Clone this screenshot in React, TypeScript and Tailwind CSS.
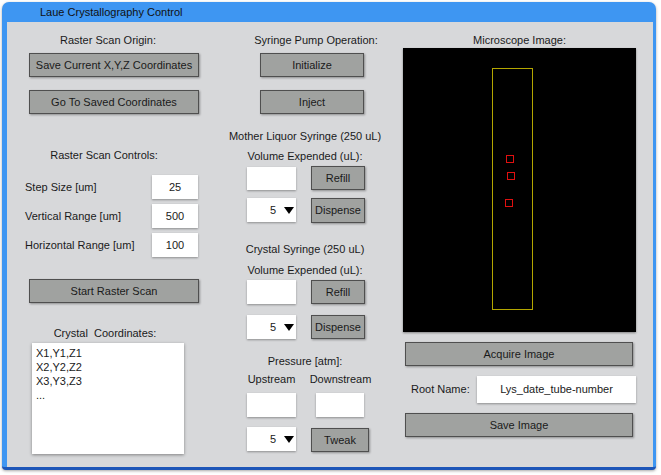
import React from "react";

const font = { fontFamily: '"Liberation Sans", Arial, sans-serif' };

function Btn({ children, className = "" }: { children: React.ReactNode; className?: string }) {
  return (
    <div
      className={
        "h-[24px] flex items-center justify-center bg-[#a0a2a0] border border-[#4f4f4f] shadow-[1px_1px_2px_rgba(0,0,0,0.35)] text-[11px] text-[#1a1a1a] whitespace-nowrap " +
        className
      }
    >
      {children}
    </div>
  );
}

function Field({ children, className = "" }: { children?: React.ReactNode; className?: string }) {
  return (
    <div
      className={
        "bg-white flex items-center justify-center shadow-[0_1px_2px_rgba(0,0,0,0.35)] text-[11px] text-[#1a1a1a] " +
        className
      }
    >
      {children}
    </div>
  );
}

function Select({ className = "" }: { className?: string }) {
  return (
    <div
      className={
        "bg-white flex items-center justify-end pr-[2px] shadow-[0_1px_2px_rgba(0,0,0,0.35)] text-[11px] text-[#1a1a1a] " +
        className
      }
    >
      <span>5</span>
      <svg width="10" height="7" viewBox="0 0 10 7" className="ml-[8px]">
        <polygon points="0,0 10,0 5,7" fill="#000" />
      </svg>
    </div>
  );
}

function Label({ children, className = "" }: { children: React.ReactNode; className?: string }) {
  return <div className={"text-[11px] leading-[13px] h-[13px] text-[#1a1a1a] whitespace-nowrap " + className}>{children}</div>;
}

export default function App() {
  return (
    <div className="w-[661px] h-[475px] bg-white overflow-hidden" style={font}>
      <div className="ml-[2px] mt-[2px] w-[654px] h-[468px] flex flex-col bg-[#3e96f2] rounded-t-[7px] rounded-b-[4px] border-b-[3px] border-[#1d56b8] shadow-[0_1px_3px_rgba(0,0,0,0.35)] overflow-hidden">
        <div className="h-[20px] shrink-0 pl-[38px] text-[11px] leading-[20px] text-[#111]">Laue Crystallography Control</div>
        <div className="flex-1 flex ml-[5px] mr-[3px] bg-[#d7d8da]">
          {/* Left column */}
          <div className="w-[214px] shrink-0 flex flex-col">
            <Label className="mt-[12px] text-center pr-[12px]">Raster Scan Origin:</Label>
            <Btn className="mt-[6px] ml-[22px] w-[170px]">Save Current X,Y,Z Coordinates</Btn>
            <Btn className="mt-[13px] ml-[22px] w-[170px]">Go To Saved Coordinates</Btn>
            <Label className="mt-[35px] text-center pr-[20px]">Raster Scan Controls:</Label>
            <div className="mt-[13px] ml-[18px] w-[173px] flex flex-col gap-[5px]">
              {[
                ["Step Size [um]", "25"],
                ["Vertical Range [um]", "500"],
                ["Horizontal Range [um]", "100"],
              ].map(([l, v]) => (
                <div key={l} className="flex items-center h-[24px]">
                  <div className="flex-1 text-[11px] text-[#1a1a1a] whitespace-nowrap">{l}</div>
                  <Field className="w-[46px] h-[24px]">{v}</Field>
                </div>
              ))}
            </div>
            <Btn className="mt-[22px] ml-[22px] w-[170px]">Start Raster Scan</Btn>
            <Label className="mt-[24px] text-center pr-[18px]">{"Crystal\u00a0 Coordinates:"}</Label>
            <div className="mt-[3px] ml-[25px] w-[152px] h-[111px] bg-white shadow-[0_1px_3px_rgba(0,0,0,0.4)] pt-[3px] pl-[4px] text-[11px] leading-[14px] text-[#1a1a1a]">
              <div>X1,Y1,Z1</div>
              <div>X2,Y2,Z2</div>
              <div>X3,Y3,Z3</div>
              <div>...</div>
            </div>
          </div>

          {/* Middle column */}
          <div className="w-[168px] shrink-0 flex flex-col">
            <Label className="mt-[12px] text-center pl-[22px]">Syringe Pump Operation:</Label>
            <Btn className="mt-[6px] ml-[39px] w-[104px]">Initialize</Btn>
            <Btn className="mt-[13px] ml-[39px] w-[104px]">Inject</Btn>
            <Label className="mt-[16px] text-center">Mother Liquor Syringe (250 uL)</Label>
            <Label className="mt-[7px] text-center">Volume Expended (uL):</Label>
            <div className="mt-[3px] ml-[26px] flex items-center h-[24px]">
              <Field className="w-[49px] h-[23px] mt-[1px]" />
              <Btn className="ml-[15px] w-[54px]">Refill</Btn>
            </div>
            <div className="mt-[8px] ml-[26px] flex items-start h-[25px]">
              <Select className="w-[49px] h-[24px]" />
              <Btn className="ml-[15px] w-[54px] h-[25px]">Dispense</Btn>
            </div>
            <Label className="mt-[20px] text-center">Crystal Syringe (250 uL)</Label>
            <Label className="mt-[8px] text-center">Volume Expended (uL):</Label>
            <div className="mt-[3px] ml-[26px] flex items-center h-[24px]">
              <Field className="w-[49px] h-[24px]" />
              <Btn className="ml-[15px] w-[54px]">Refill</Btn>
            </div>
            <div className="mt-[11px] ml-[26px] flex items-start h-[25px]">
              <Select className="w-[49px] h-[24px]" />
              <Btn className="ml-[15px] w-[54px]">Dispense</Btn>
            </div>
            <Label className="mt-[15px] text-center">Pressure [atm]:</Label>
            <div className="mt-[5px] flex h-[13px] text-[11px] leading-[13px] text-[#1a1a1a]">
              <div className="ml-[20px] w-[61px] text-center whitespace-nowrap">Upstream</div>
              <div className="ml-[4px] w-[69px] text-center whitespace-nowrap">Downstream</div>
            </div>
            <div className="mt-[7px] ml-[26px] flex">
              <Field className="w-[49px] h-[24px]" />
              <Field className="ml-[20px] w-[48px] h-[24px]" />
            </div>
            <div className="mt-[10px] ml-[26px] flex items-start">
              <Select className="w-[49px] h-[24px]" />
              <Btn className="ml-[15px] mt-[1px] w-[58px]">Tweak</Btn>
            </div>
          </div>

          {/* Right column */}
          <div className="flex-1 pl-[14px] flex flex-col">
            <Label className="mt-[12px] w-[233px] text-center">Microscope Image:</Label>
            <div className="mt-[1px] w-[233px] h-[284px] bg-black relative shadow-[0_1px_2px_rgba(0,0,0,0.4)]">
              <div className="absolute left-[89px] top-[20px] w-[41px] h-[242px] border border-[#b3a600]" />
              <div className="absolute left-[103px] top-[107px] w-[8px] h-[8px] border border-[#e01010]" />
              <div className="absolute left-[104px] top-[124px] w-[8px] h-[8px] border border-[#e01010]" />
              <div className="absolute left-[102px] top-[151px] w-[8px] h-[8px] border border-[#e01010]" />
            </div>
            <Btn className="mt-[10px] ml-[2px] w-[228px]">Acquire Image</Btn>
            <div className="mt-[10px] flex items-center h-[27px]">
              <div className="ml-[8px] w-[66px] text-[11px] text-[#1a1a1a] whitespace-nowrap">Root Name:</div>
              <Field className="w-[159px] h-[27px]">Lys_date_tube-number</Field>
            </div>
            <Btn className="mt-[10px] ml-[2px] w-[228px]">Save Image</Btn>
          </div>
        </div>
      </div>
    </div>
  );
}
